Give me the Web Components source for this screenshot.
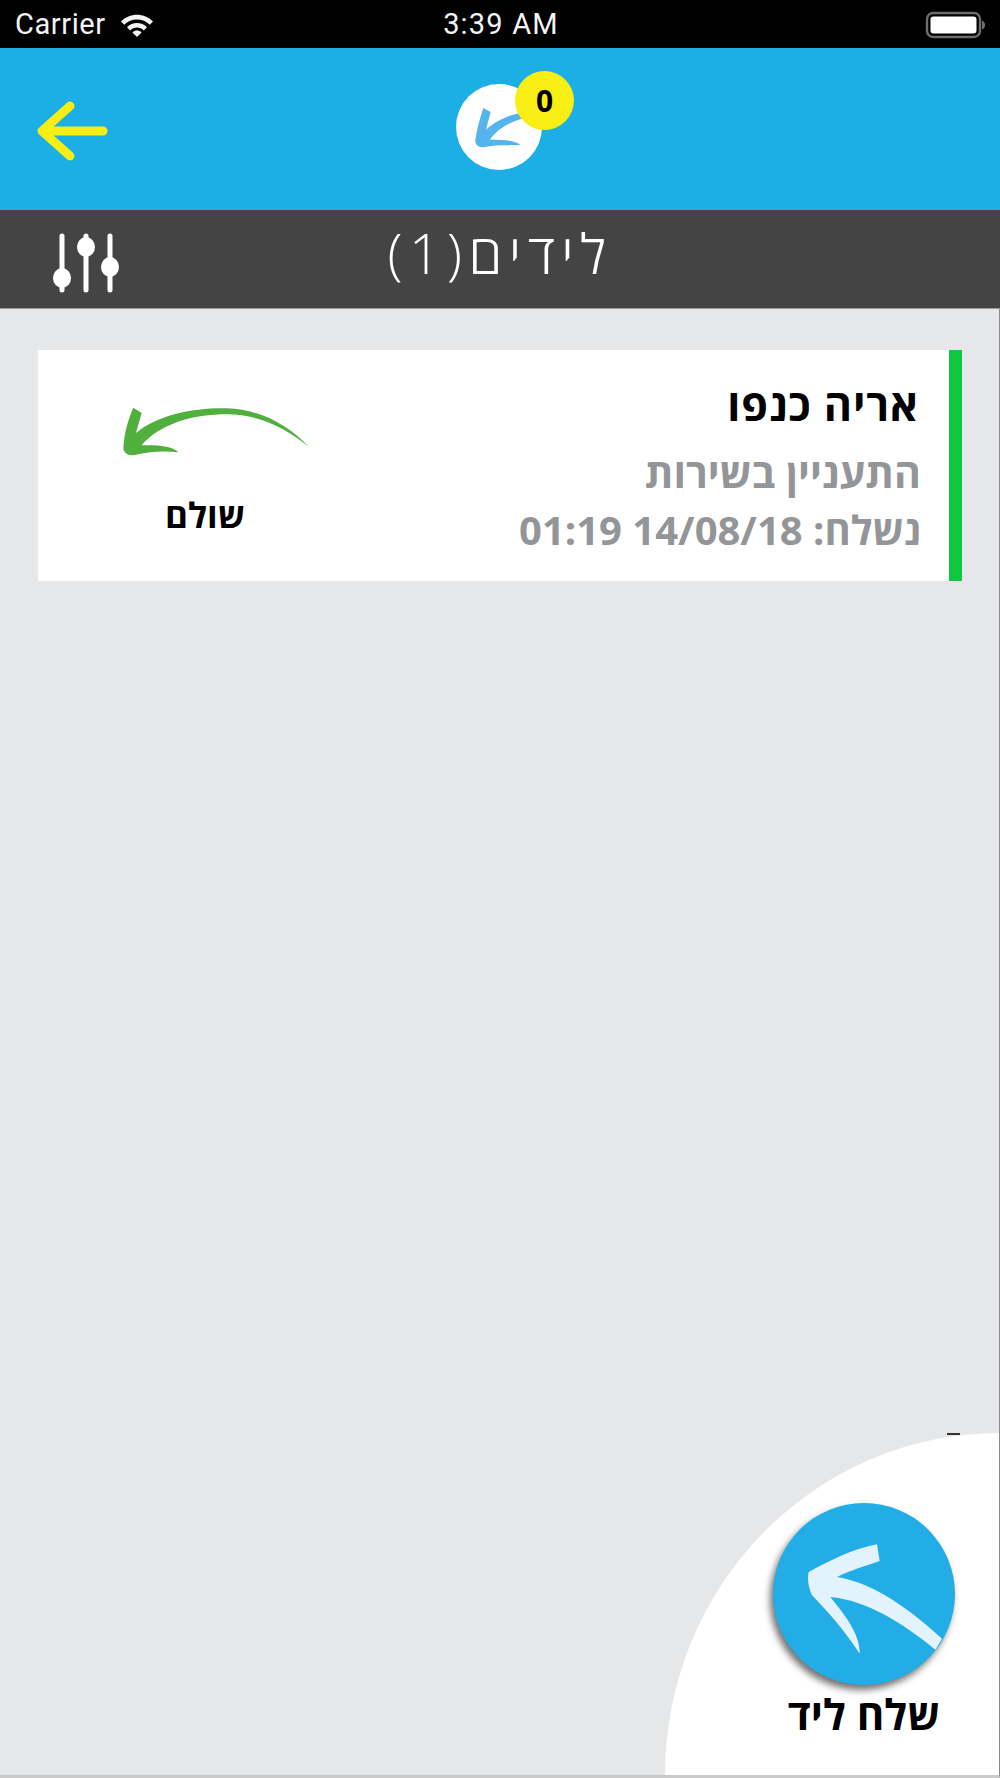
<!DOCTYPE html>
<html lang="he">
<head>
<meta charset="utf-8">
<title>לידים</title>
<style>
    html, body { margin: 0; padding: 0; }
    body {
        width: 1000px;
        height: 1778px;
        overflow: hidden;
        position: relative;
        display: flex;
        flex-direction: column;
        background: #e6e7e9;
        font-family: "Open Sans", "Noto Sans", "Liberation Sans", sans-serif;
    }
</style>
</head>
<body>
<status-bar></status-bar>
<app-header count="0"></app-header>
<title-bar>לידים(1)</title-bar>
<lead-list>
    <lead-card name="אריה כנפו" note="התעניין בשירות" sent="נשלח: 14/08/18 01:19" state="שולם"></lead-card>
</lead-list>
<send-button>שלח ליד</send-button>

<script>
class StatusBar extends HTMLElement {
    constructor() {
        super();
        this.attachShadow({ mode: "open" });
    }
    connectedCallback() {
        this.shadowRoot.innerHTML = `
            <style>
                :host {
                    display: grid;
                    grid-template-columns: 1fr auto 1fr;
                    align-items: center;
                    height: 48px;
                    padding: 1px 15px 0;
                    box-sizing: border-box;
                    background: #000;
                    color: #f4f4f4;
                    font: 400 29px/47px Roboto, "Liberation Sans", sans-serif;
                    direction: ltr;
                }
                .left { display: flex; align-items: center; gap: 14px; letter-spacing: 0.6px; }
                .right { display: flex; justify-content: flex-end; }
                .time { letter-spacing: 1.2px; margin-left: 2px; }
                svg { display: block; }
            </style>
            <div class="left">
                <span>Carrier</span>
                <svg width="34" height="24" viewBox="0 0 34 24">
                    <path d="M1 8.5C9.5 -0.5 24.5 -0.5 33 8.5L29.8 11.8C23 4.8 11 4.8 4.2 11.8Z" fill="#f4f4f4"/>
                    <path d="M7 14.2C12.5 8.6 21.5 8.6 27 14.2L23.8 17.4C20 13.6 14 13.6 10.2 17.4Z" fill="#f4f4f4"/>
                    <path d="M12.4 19.4C15 17 19 17 21.6 19.4L17 24Z" fill="#f4f4f4"/>
                </svg>
            </div>
            <div class="time">3:39 AM</div>
            <div class="right">
                <svg width="60" height="28" viewBox="0 0 60 28">
                    <rect x="2" y="2" width="53" height="24" rx="6" fill="none" stroke="#6d6d6d" stroke-width="2.4"/>
                    <rect x="5.5" y="5.5" width="46" height="17" rx="3" fill="#fff"/>
                    <path d="M57 9.5C59 10.5 60 12 60 14S59 17.5 57 18.5Z" fill="#6d6d6d"/>
                </svg>
            </div>
        `;
    }
}

class AppHeader extends HTMLElement {
    constructor() {
        super();
        this.attachShadow({ mode: "open" });
    }
    connectedCallback() {
        this.shadowRoot.innerHTML = `
            <style>
                :host {
                    display: flex;
                    align-items: center;
                    justify-content: center;
                    position: relative;
                    height: 162px;
                    background: #1cafe6;
                }
                .back {
                    position: absolute;
                    left: 36px;
                    top: 52px;
                    display: block;
                }
                .logo {
                    position: relative;
                    width: 86px;
                    height: 86px;
                    margin: -5px 0 0 -2px;
                    border-radius: 50%;
                    background: #fff;
                }
                .logo svg { display: block; width: 86px; height: 86px; }
                .badge {
                    position: absolute;
                    left: 59px;
                    top: -13px;
                    width: 59px;
                    height: 59px;
                    border-radius: 50%;
                    background: #f7ee13;
                    color: #000;
                    display: flex;
                    align-items: center;
                    justify-content: center;
                    font: 700 30px "Open Sans", "Liberation Sans", sans-serif;
                }
            </style>
            <svg class="back" width="74" height="62" viewBox="0 0 74 62">
                <path d="M34 6L6 31L34 56M6 31H67" fill="none" stroke="#f7ee13" stroke-width="9" stroke-linecap="round" stroke-linejoin="round"/>
            </svg>
            <div class="logo">
                <svg viewBox="78 68 258 258">
                    <path d="M160 140L182 152L168 205C195 180 235 160 275 155L275 172C235 185 200 205 180 235C215 235 255 235 272 252C235 250 190 252 160 258C145 258 135 250 136 238C140 205 150 170 160 140Z" fill="#55b4ec"/>
                </svg>
                <div class="badge">${this.getAttribute("count")}</div>
            </div>
        `;
    }
}

class TitleBar extends HTMLElement {
    constructor() {
        super();
        this.attachShadow({ mode: "open" });
    }
    connectedCallback() {
        this.shadowRoot.innerHTML = `
            <style>
                :host {
                    display: flex;
                    align-items: center;
                    justify-content: center;
                    position: relative;
                    height: 99px;
                    box-sizing: border-box;
                    background: #444;
                    border-bottom: 1px solid #9a9a9a;
                    color: #fff;
                }
                .title {
                    direction: rtl;
                    margin: -14px 0 0 0;
                    font: 300 55px "Open Sans", "Liberation Sans", sans-serif;
                    letter-spacing: 6.5px;
                }
                svg { position: absolute; left: 50px; top: 23px; }
            </style>
            <div class="title"><slot></slot></div>
            <svg width="72" height="60" viewBox="0 0 72 60">
                <g stroke="#fff" stroke-width="5" stroke-linecap="round">
                    <path d="M12 3V57M36 3V57M60 3V57"/>
                </g>
                <ellipse cx="12" cy="45" rx="9" ry="10" fill="#fff"/>
                <ellipse cx="36" cy="14" rx="9" ry="10" fill="#fff"/>
                <ellipse cx="60" cy="34" rx="9" ry="10" fill="#fff"/>
            </svg>
        `;
    }
}

class LeadList extends HTMLElement {
    constructor() {
        super();
        this.attachShadow({ mode: "open" });
    }
    connectedCallback() {
        this.shadowRoot.innerHTML = `
            <style>
                :host {
                    display: block;
                    flex: 1;
                    padding: 41px 37px 0 38px;
                    border-right: 1px solid #8a8a8a;
                    border-bottom: 3px solid #c9c9c9;
                }
            </style>
            <slot></slot>
        `;
    }
}

class LeadCard extends HTMLElement {
    constructor() {
        super();
        this.attachShadow({ mode: "open" });
    }
    connectedCallback() {
        this.shadowRoot.innerHTML = `
            <style>
                :host {
                    display: flex;
                    justify-content: space-between;
                    height: 231px;
                    box-sizing: border-box;
                    background: #fff;
                    border-right: 13px solid #10c83f;
                    font-family: "Open Sans", "Liberation Sans", sans-serif;
                    font-weight: 700;
                }
                .state {
                    width: 280px;
                    display: flex;
                    flex-direction: column;
                    align-items: center;
                    padding-top: 57px;
                    box-sizing: border-box;
                    margin-left: 27px;
                }
                .state svg { display: block; margin-left: 10px; }
                .state div {
                    margin-top: 20px;
                    font-size: 35px;
                    line-height: 40px;
                    color: #000;
                }
                .info {
                    direction: rtl;
                    padding: 26px 28px 0 0;
                    color: #939598;
                    font-size: 40px;
                }
                .info div { line-height: 58px; white-space: nowrap; }
                .info .name { color: #000; margin: 0 2px 9px 0; font-size: 43px; letter-spacing: 1px; }
                .info .note { font-size: 41px; }
            </style>
            <div class="state">
                <svg width="220" height="68" viewBox="0 0 660 204">
                    <path transform="translate(0 -50)" d="M100 52L125 68L108 128C170 75 280 52 380 54C490 58 570 110 627 170C560 115 480 72 380 72C280 72 180 100 125 165C170 165 215 165 235 186C190 180 140 185 100 195C85 195 72 188 70 175C72 130 85 85 100 52Z" fill="#51b03d"/>
                </svg>
                <div>${this.getAttribute("state")}</div>
            </div>
            <div class="info">
                <div class="name">${this.getAttribute("name")}</div>
                <div class="note">${this.getAttribute("note")}</div>
                <div>${this.getAttribute("sent")}</div>
            </div>
        `;
    }
}

class SendButton extends HTMLElement {
    constructor() {
        super();
        this.attachShadow({ mode: "open" });
    }
    connectedCallback() {
        this.shadowRoot.innerHTML = `
            <style>
                :host {
                    position: absolute;
                    right: 1px;
                    bottom: 3px;
                    width: 334px;
                    height: 342px;
                    box-sizing: border-box;
                    padding: 70px 44px 0 108px;
                    background: #fff;
                    border-top-left-radius: 100% 100%;
                    display: flex;
                    flex-direction: column;
                    align-items: center;
                    font-family: "Open Sans", "Liberation Sans", sans-serif;
                }
                /* small dark tick on the top edge, it is in the source image */
                :host::before {
                    content: "";
                    position: absolute;
                    top: 0;
                    right: 39px;
                    width: 13px;
                    height: 2px;
                    background: #333;
                }
                .circle {
                    flex: none;
                    width: 182px;
                    height: 182px;
                    border-radius: 50%;
                    background: #22ade6;
                    box-shadow: -3px 5px 7px rgba(0, 0, 0, 0.55);
                    overflow: hidden;
                }
                .circle svg { display: block; width: 182px; height: 182px; }
                .label {
                    margin-top: 1px;
                    direction: rtl;
                    white-space: nowrap;
                    font-size: 42px;
                    line-height: 56px;
                    font-weight: 700;
                    color: #000;
                }
            </style>
            <div class="circle">
                <svg viewBox="398 308 546 546">
                    <path d="M710 432L718 482C680 495 630 510 590 530C680 545 780 600 905 715L885 748C790 670 680 600 570 590C610 640 660 700 658 760C620 700 560 630 515 585C505 560 500 540 505 515C570 480 640 445 710 432Z" fill="#e3f3fd"/>
                </svg>
            </div>
            <div class="label"><slot></slot></div>
        `;
    }
}

customElements.define("status-bar", StatusBar);
customElements.define("app-header", AppHeader);
customElements.define("title-bar", TitleBar);
customElements.define("lead-list", LeadList);
customElements.define("lead-card", LeadCard);
customElements.define("send-button", SendButton);
</script>
</body>
</html>
